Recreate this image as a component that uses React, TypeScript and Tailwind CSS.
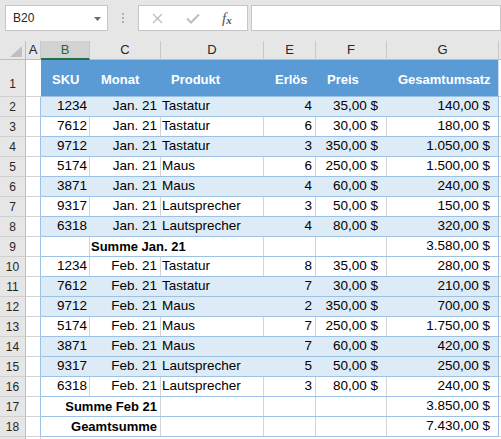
import React from "react";

type Row = {
  n: number;
  kind: "data" | "sumL" | "sumR";
  band?: boolean;
  sku?: string;
  monat?: string;
  produkt?: string;
  e?: string;
  p?: string;
  g?: string;
  label?: string;
};

const rows: Row[] = [
  { n: 2, kind: "data", band: true, sku: "1234", monat: "Jan. 21", produkt: "Tastatur", e: "4", p: "35,00 $", g: "140,00 $" },
  { n: 3, kind: "data", sku: "7612", monat: "Jan. 21", produkt: "Tastatur", e: "6", p: "30,00 $", g: "180,00 $" },
  { n: 4, kind: "data", band: true, sku: "9712", monat: "Jan. 21", produkt: "Tastatur", e: "3", p: "350,00 $", g: "1.050,00 $" },
  { n: 5, kind: "data", sku: "5174", monat: "Jan. 21", produkt: "Maus", e: "6", p: "250,00 $", g: "1.500,00 $" },
  { n: 6, kind: "data", band: true, sku: "3871", monat: "Jan. 21", produkt: "Maus", e: "4", p: "60,00 $", g: "240,00 $" },
  { n: 7, kind: "data", sku: "9317", monat: "Jan. 21", produkt: "Lautsprecher", e: "3", p: "50,00 $", g: "150,00 $" },
  { n: 8, kind: "data", band: true, sku: "6318", monat: "Jan. 21", produkt: "Lautsprecher", e: "4", p: "80,00 $", g: "320,00 $" },
  { n: 9, kind: "sumL", label: "Summe Jan. 21", g: "3.580,00 $" },
  { n: 10, kind: "data", sku: "1234", monat: "Feb. 21", produkt: "Tastatur", e: "8", p: "35,00 $", g: "280,00 $" },
  { n: 11, kind: "data", band: true, sku: "7612", monat: "Feb. 21", produkt: "Tastatur", e: "7", p: "30,00 $", g: "210,00 $" },
  { n: 12, kind: "data", band: true, sku: "9712", monat: "Feb. 21", produkt: "Maus", e: "2", p: "350,00 $", g: "700,00 $" },
  { n: 13, kind: "data", sku: "5174", monat: "Feb. 21", produkt: "Maus", e: "7", p: "250,00 $", g: "1.750,00 $" },
  { n: 14, kind: "data", band: true, sku: "3871", monat: "Feb. 21", produkt: "Maus", e: "7", p: "60,00 $", g: "420,00 $" },
  { n: 15, kind: "data", band: true, sku: "9317", monat: "Feb. 21", produkt: "Lautsprecher", e: "5", p: "50,00 $", g: "250,00 $" },
  { n: 16, kind: "data", sku: "6318", monat: "Feb. 21", produkt: "Lautsprecher", e: "3", p: "80,00 $", g: "240,00 $" },
  { n: 17, kind: "sumR", label: "Summe Feb 21", g: "3.850,00 $" },
  { n: 18, kind: "sumR", label: "Geamtsumme", g: "7.430,00 $" },
];

function RowHeader({ n, tall }: { n?: number | string; tall?: boolean }) {
  return (
    <div
      className={`w-[26px] shrink-0 bg-[#e6e6e6] border-r border-b border-r-[#bdbdbd] border-b-[#d0d0d0] flex justify-center text-[12px] text-[#262626] ${
        tall ? "items-end pb-[3px]" : "items-center"
      }`}
    >
      {n}
    </div>
  );
}

function DataRow({ r }: { r: Row }) {
  const bg = r.band ? "bg-[#ddebf7]" : "bg-white";
  const vr = r.band ? "border-r-[#ddebf7]" : "border-r-[#d4d4d4]";
  const base = "shrink-0 h-full border-r flex items-center whitespace-nowrap";
  return (
    <div className="flex h-[20px]">
      <RowHeader n={r.n} />
      <div className="w-[15px] shrink-0 bg-white border-b border-b-[#d4d4d4] border-r border-r-[#9bc2e6]" />
      <div className={`flex ${bg} border-b border-b-[#9bc2e6] text-[13.5px] text-black`}>
        {r.kind === "data" && (
          <>
            <div className={`${base} ${vr} w-[49px] justify-end pr-[2px]`}>{r.sku}</div>
            <div className={`${base} ${vr} w-[71px] justify-end pr-[3px]`}>{r.monat}</div>
            <div className={`${base} ${vr} w-[103px] justify-start pl-[1px]`}>{r.produkt}</div>
            <div className={`${base} ${vr} w-[52px] justify-end pr-[3px]`}>{r.e}</div>
            <div className={`${base} ${vr} w-[71px] justify-end pr-[8px]`}>{r.p}</div>
          </>
        )}
        {r.kind === "sumL" && (
          <>
            <div className={`${base} ${vr} w-[49px]`} />
            <div className={`${base} border-r-transparent w-[71px] justify-start pl-[1px] font-bold text-[13px]`}>
              <span>{r.label}</span>
            </div>
            <div className={`${base} ${vr} w-[103px]`} />
            <div className={`${base} ${vr} w-[52px]`} />
            <div className={`${base} ${vr} w-[71px]`} />
          </>
        )}
        {r.kind === "sumR" && (
          <>
            <div className={`${base} border-r-transparent w-[49px]`} />
            <div className={`${base} ${vr} w-[71px] justify-end pr-[3px] font-bold text-[13px]`}>
              <span className="shrink-0">{r.label}</span>
            </div>
            <div className={`${base} ${vr} w-[103px]`} />
            <div className={`${base} ${vr} w-[52px]`} />
            <div className={`${base} ${vr} w-[71px]`} />
          </>
        )}
        <div className={`${base} border-r-[#9bc2e6] w-[112px] justify-end pr-[8px]`}>{r.g}</div>
      </div>
      <div className="flex-1 bg-white border-b border-b-[#d4d4d4]" />
    </div>
  );
}

function ColHeader({ w, label, sel }: { w: string; label: string; sel?: boolean }) {
  return (
    <div
      className={`${w} shrink-0 h-full flex items-center justify-center border-r border-r-[#c8c8c8] text-[13px] ${
        sel ? "bg-[#d2d2d2] border-b-2 border-b-[#217346] text-[#1e6b41]" : "border-b border-b-[#bdbdbd] text-[#262626]"
      }`}
    >
      {label}
    </div>
  );
}

export default function App() {
  return (
    <div className="w-[501px] h-[439px] overflow-hidden bg-white font-['Liberation_Sans',Arial,sans-serif]">
      {/* Formula bar */}
      <div className="h-[41px] bg-[#e6e6e6] flex items-start pt-[5px] pl-[5px]">
        <div className="w-[103px] h-[26px] bg-white border border-[#c6c6c6] flex items-center pl-[7px] pr-[6px] text-[12px] text-[#262626]">
          <span className="flex-1">B20</span>
          <svg width="7" height="4" viewBox="0 0 7 4" className="mt-[1px]">
            <polygon points="0,0 7,0 3.5,4" fill="#6b6b6b" />
          </svg>
        </div>
        <div className="w-[30px] h-[26px] flex flex-col items-center justify-center gap-[2px]">
          <div className="w-[2px] h-[2px] bg-[#b0b0b0]" />
          <div className="w-[2px] h-[2px] bg-[#b0b0b0]" />
          <div className="w-[2px] h-[2px] bg-[#b0b0b0]" />
        </div>
        <div className="w-[110px] h-[26px] bg-white border border-[#c6c6c6] flex items-center">
          <div className="ml-[12px] w-[12px] h-[12px] flex items-center justify-center">
            <svg width="11" height="11" viewBox="0 0 11 11">
              <path d="M1 1 L10 10 M10 1 L1 10" stroke="#bdbdbd" strokeWidth="1.3" fill="none" />
            </svg>
          </div>
          <div className="ml-[23px] w-[14px] h-[12px] flex items-center justify-center">
            <svg width="14" height="11" viewBox="0 0 14 11">
              <path d="M1 5.5 L5 9.5 L13 1.5" stroke="#bdbdbd" strokeWidth="2" fill="none" />
            </svg>
          </div>
          <div className="ml-[22px] font-['Liberation_Serif',serif] italic text-[#555] leading-none flex items-end">
            <span className="text-[15px]">f</span>
            <span className="text-[11px] font-bold">x</span>
          </div>
        </div>
        <div className="ml-[3px] flex-1 h-[26px] bg-white border border-[#c6c6c6]" />
      </div>

      {/* Column headers */}
      <div className="flex h-[19px] bg-[#e6e6e6]">
        <div className="w-[26px] shrink-0 h-full border-r border-b border-[#bdbdbd] flex items-end justify-end pr-[3px] pb-[2px]">
          <svg width="12" height="11" viewBox="0 0 12 11">
            <polygon points="12,0 12,11 0,11" fill="#bfbfbf" />
          </svg>
        </div>
        <ColHeader w="w-[15px]" label="A" />
        <ColHeader w="w-[49px]" label="B" sel />
        <ColHeader w="w-[71px]" label="C" />
        <ColHeader w="w-[103px]" label="D" />
        <ColHeader w="w-[52px]" label="E" />
        <ColHeader w="w-[71px]" label="F" />
        <ColHeader w="w-[112px]" label="G" />
        <div className="flex-1 h-full border-b border-b-[#bdbdbd]" />
      </div>

      {/* Row 1: table header */}
      <div className="flex h-[37px]">
        <RowHeader n={1} tall />
        <div className="w-[15px] shrink-0 bg-white border-b border-b-[#d4d4d4]" />
        <div className="flex bg-[#5b9bd5] border-b border-b-[#9bc2e6] text-white font-bold text-[13px]">
          <div className="w-[49px] shrink-0 flex items-center pl-[11px] pt-[3px]">SKU</div>
          <div className="w-[71px] shrink-0 flex items-center pl-[11px] pt-[3px]">Monat</div>
          <div className="w-[103px] shrink-0 flex items-center pl-[10px] pt-[3px]">Produkt</div>
          <div className="w-[52px] shrink-0 flex items-center pl-[11px] pt-[3px]">Erlös</div>
          <div className="w-[71px] shrink-0 flex items-center pl-[11px] pt-[3px]">Preis</div>
          <div className="w-[112px] shrink-0 flex items-center pl-[11px] pt-[3px] border-r border-r-[#c9dcef] whitespace-nowrap">
            Gesamtumsatz
          </div>
        </div>
        <div className="flex-1 bg-white border-b border-b-[#d4d4d4]" />
      </div>

      {rows.map((r) => (
        <DataRow key={r.n} r={r} />
      ))}

      {/* Row 19 sliver */}
      <div className="flex h-[20px]">
        <RowHeader />
        <div className="w-[15px] shrink-0 bg-white border-r border-r-[#d4d4d4]" />
        <div className="flex-1 bg-white" />
      </div>
    </div>
  );
}
